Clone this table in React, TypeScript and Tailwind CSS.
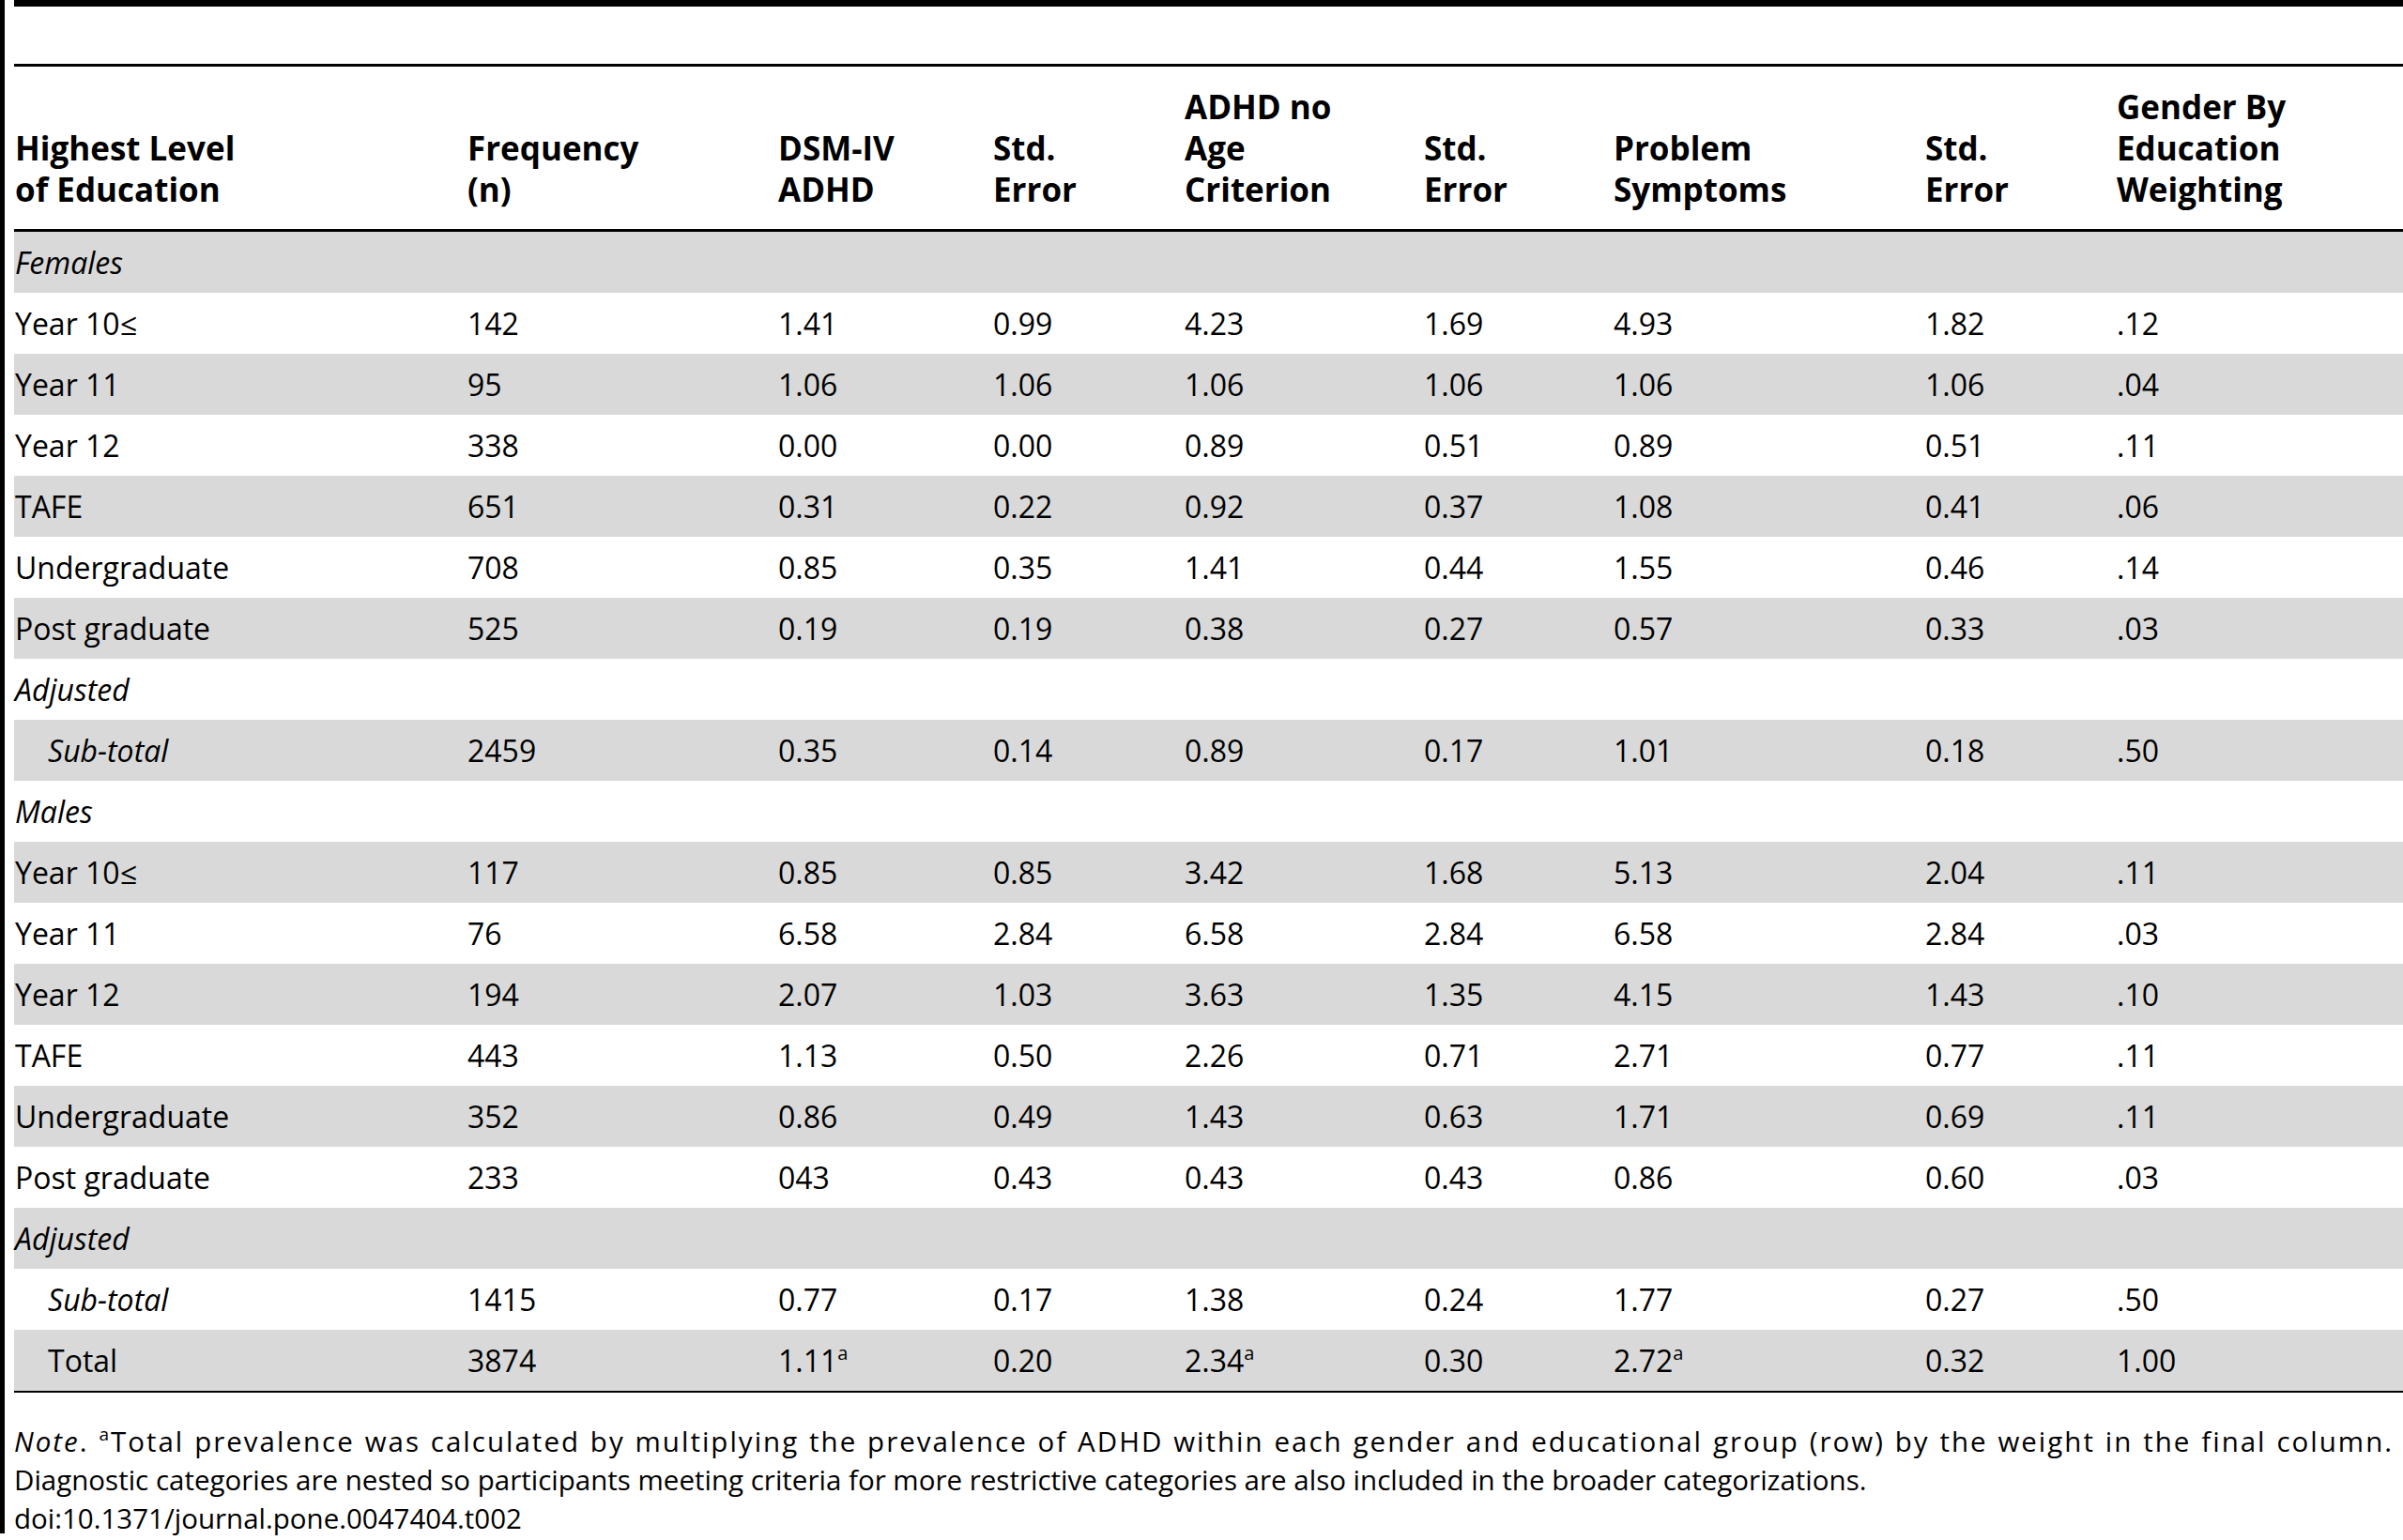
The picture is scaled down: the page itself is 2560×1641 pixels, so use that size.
import React from 'react';

type Row = {
  label: string;
  kind?: 'group' | 'sub' | 'total';
  cells?: string[];
};

const rows: Row[] = [
  { label: 'Females', kind: 'group' },
  { label: 'Year 10≤', cells: ['142', '1.41', '0.99', '4.23', '1.69', '4.93', '1.82', '.12'] },
  { label: 'Year 11', cells: ['95', '1.06', '1.06', '1.06', '1.06', '1.06', '1.06', '.04'] },
  { label: 'Year 12', cells: ['338', '0.00', '0.00', '0.89', '0.51', '0.89', '0.51', '.11'] },
  { label: 'TAFE', cells: ['651', '0.31', '0.22', '0.92', '0.37', '1.08', '0.41', '.06'] },
  { label: 'Undergraduate', cells: ['708', '0.85', '0.35', '1.41', '0.44', '1.55', '0.46', '.14'] },
  { label: 'Post graduate', cells: ['525', '0.19', '0.19', '0.38', '0.27', '0.57', '0.33', '.03'] },
  { label: 'Adjusted', kind: 'group' },
  { label: 'Sub-total', kind: 'sub', cells: ['2459', '0.35', '0.14', '0.89', '0.17', '1.01', '0.18', '.50'] },
  { label: 'Males', kind: 'group' },
  { label: 'Year 10≤', cells: ['117', '0.85', '0.85', '3.42', '1.68', '5.13', '2.04', '.11'] },
  { label: 'Year 11', cells: ['76', '6.58', '2.84', '6.58', '2.84', '6.58', '2.84', '.03'] },
  { label: 'Year 12', cells: ['194', '2.07', '1.03', '3.63', '1.35', '4.15', '1.43', '.10'] },
  { label: 'TAFE', cells: ['443', '1.13', '0.50', '2.26', '0.71', '2.71', '0.77', '.11'] },
  { label: 'Undergraduate', cells: ['352', '0.86', '0.49', '1.43', '0.63', '1.71', '0.69', '.11'] },
  { label: 'Post graduate', cells: ['233', '043', '0.43', '0.43', '0.43', '0.86', '0.60', '.03'] },
  { label: 'Adjusted', kind: 'group' },
  { label: 'Sub-total', kind: 'sub', cells: ['1415', '0.77', '0.17', '1.38', '0.24', '1.77', '0.27', '.50'] },
  { label: 'Total', kind: 'total', cells: ['3874', '1.11^', '0.20', '2.34^', '0.30', '2.72^', '0.32', '1.00'] },
];

const headers: string[][] = [
  ['Highest Level', 'of Education'],
  ['Frequency', '(n)'],
  ['DSM-IV', 'ADHD'],
  ['Std.', 'Error'],
  ['ADHD no', 'Age', 'Criterion'],
  ['Std.', 'Error'],
  ['Problem', 'Symptoms'],
  ['Std.', 'Error'],
  ['Gender By', 'Education', 'Weighting'],
];

const grid =
  'grid grid-cols-[483px_331px_229px_204px_255px_202px_332px_204px_305px]';

function Value({ text }: { text: string }) {
  if (text.endsWith('^')) {
    return (
      <span>
        {text.slice(0, -1)}
        <sup className="relative -top-[13px] text-[20px]">a</sup>
      </span>
    );
  }
  return <span>{text}</span>;
}

export default function App() {
  return (
    <div
      className="flex min-h-[1641px] w-[2560px] bg-white text-black"
      style={{ fontFamily: '"Open Sans", "Noto Sans", sans-serif' }}
    >
      <div className="h-[1634px] w-[5px] shrink-0 bg-black" />
      <div className="ml-[10px] flex-1">
        <div className="h-[7px] bg-black" />
        <div className="h-[61px]" />
        <div className="h-[3px] bg-black" />

        {/* header */}
        <div className={`${grid} h-[173px] items-end pb-[20px] text-[35px] font-bold leading-[44px]`}>
          {headers.map((lines, i) => (
            <div key={i} className={i === 0 ? 'pl-[1px]' : ''}>
              {lines.map((l) => (
                <div key={l}>{l}</div>
              ))}
            </div>
          ))}
        </div>
        <div className="h-[3px] bg-black" />

        {/* body */}
        {rows.map((r, i) => (
          <div
            key={i}
            className={`${grid} h-[65px] items-center text-[32px] ${i % 2 === 0 ? 'bg-[#d9d9d9]' : 'bg-white'}`}
          >
            <div
              className={
                r.kind === 'group'
                  ? 'pl-[1px] italic'
                  : r.kind === 'sub'
                    ? 'pl-[36px] italic'
                    : r.kind === 'total'
                      ? 'pl-[36px]'
                      : 'pl-[1px]'
              }
            >
              {r.label}
            </div>
            {(r.cells ?? []).map((c, j) => (
              <div key={j}>
                <Value text={c} />
              </div>
            ))}
          </div>
        ))}
        <div className="h-[2px] bg-black" />

        {/* footnote */}
        <div className="mt-[31px] pr-[10px] text-[29.5px] leading-[41px]">
          <p className="text-justify tracking-[2px] [text-align-last:justify]">
            <i>Note</i>. <sup className="relative -top-[12px] text-[19px]">a</sup>Total prevalence was calculated by
            multiplying the prevalence of ADHD within each gender and educational group (row) by the weight in the
            final column.
          </p>
          <p>
            Diagnostic categories are nested so participants meeting criteria for more restrictive categories are also
            included in the broader categorizations.
          </p>
          <p>doi:10.1371/journal.pone.0047404.t002</p>
        </div>
      </div>
    </div>
  );
}
